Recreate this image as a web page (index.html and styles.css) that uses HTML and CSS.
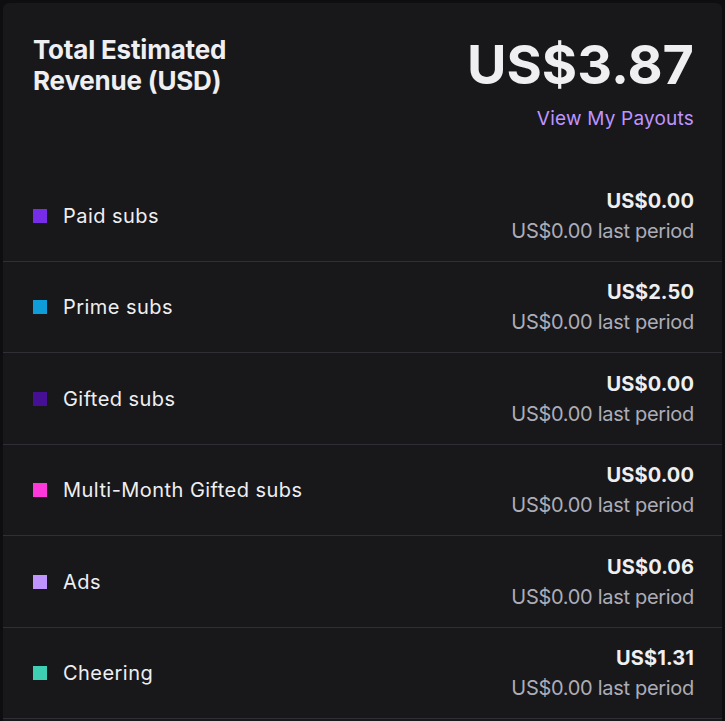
FILE: index.html
```html
<!DOCTYPE html>
<html>
<head>
<meta charset="utf-8">
<link rel="stylesheet" href="styles.css">
</head>
<body>
<div class="card">
  <div class="header">
    <h1 class="title">Total Estimated<br>Revenue (USD)</h1>
    <div class="total">
      <div class="total-amount">US$3.87</div>
      <a class="payouts" href="#">View My Payouts</a>
    </div>
  </div>
  <ul class="rows">
    <li class="row">
      <div class="label"><span class="swatch paid"></span>Paid subs</div>
      <div class="values"><div class="amount">US$0.00</div><div class="prev">US$0.00 last period</div></div>
    </li>
    <li class="row">
      <div class="label"><span class="swatch prime"></span>Prime subs</div>
      <div class="values"><div class="amount">US$2.50</div><div class="prev">US$0.00 last period</div></div>
    </li>
    <li class="row">
      <div class="label"><span class="swatch gifted"></span>Gifted subs</div>
      <div class="values"><div class="amount">US$0.00</div><div class="prev">US$0.00 last period</div></div>
    </li>
    <li class="row">
      <div class="label"><span class="swatch multi"></span>Multi-Month Gifted subs</div>
      <div class="values"><div class="amount">US$0.00</div><div class="prev">US$0.00 last period</div></div>
    </li>
    <li class="row">
      <div class="label"><span class="swatch ads"></span>Ads</div>
      <div class="values"><div class="amount">US$0.06</div><div class="prev">US$0.00 last period</div></div>
    </li>
    <li class="row">
      <div class="label"><span class="swatch cheer"></span>Cheering</div>
      <div class="values"><div class="amount">US$1.31</div><div class="prev">US$0.00 last period</div></div>
    </li>
  </ul>
</div>
</body>
</html>
```
FILE: styles.css
```css
html, body {
  margin: 0;
  padding: 0;
  background: #0e0e10;
  font-family: Inter, "Noto Sans", sans-serif;
  color: #efeff1;
}
body {
  padding: 3px;
  min-height: 721px;
  box-sizing: border-box;
}
.card {
  background: #18181b;
  border-radius: 6px;
  width: 719px;
  min-height: 730px;
}
.header {
  display: flex;
  justify-content: space-between;
  align-items: flex-start;
  padding: 31px 28px 0 30px;
  height: 167px;
  box-sizing: border-box;
}
.title {
  margin: 0;
  font-size: 26px;
  line-height: 31px;
  font-weight: 700;
  letter-spacing: -0.2px;
}
.total {
  display: flex;
  flex-direction: column;
  align-items: flex-end;
}
.total-amount {
  font-size: 54px;
  line-height: 60px;
  font-weight: 700;
  letter-spacing: 0;
  margin-top: 1px;
}
.payouts {
  margin-top: 11px;
  font-size: 19px;
  line-height: 26px;
  letter-spacing: 0.2px;
  color: #bf94ff;
  text-decoration: none;
}
.rows {
  list-style: none;
  margin: 0;
  padding: 0;
}
.row {
  display: flex;
  justify-content: space-between;
  align-items: center;
  padding: 16px 28px 15px 30px;
  border-bottom: 1px solid #2f2f35;
  height: 91.5px;
  box-sizing: border-box;
}
.label {
  display: flex;
  align-items: center;
  font-size: 20px;
  letter-spacing: 0.45px;
}
.swatch {
  width: 14px;
  height: 14px;
  margin-right: 16px;
}
.paid { background: #772ce8; }
.prime { background: #0e9dd9; }
.gifted { background: #451093; }
.multi { background: #ff38db; }
.ads { background: #bf94ff; }
.cheer { background: #3ecfb3; }
.values {
  text-align: right;
  font-size: 20px;
  line-height: 30px;
}
.amount {
  font-weight: 700;
  letter-spacing: 0.1px;
}
.prev {
  color: #adadb8;
  letter-spacing: -0.3px;
}
```
